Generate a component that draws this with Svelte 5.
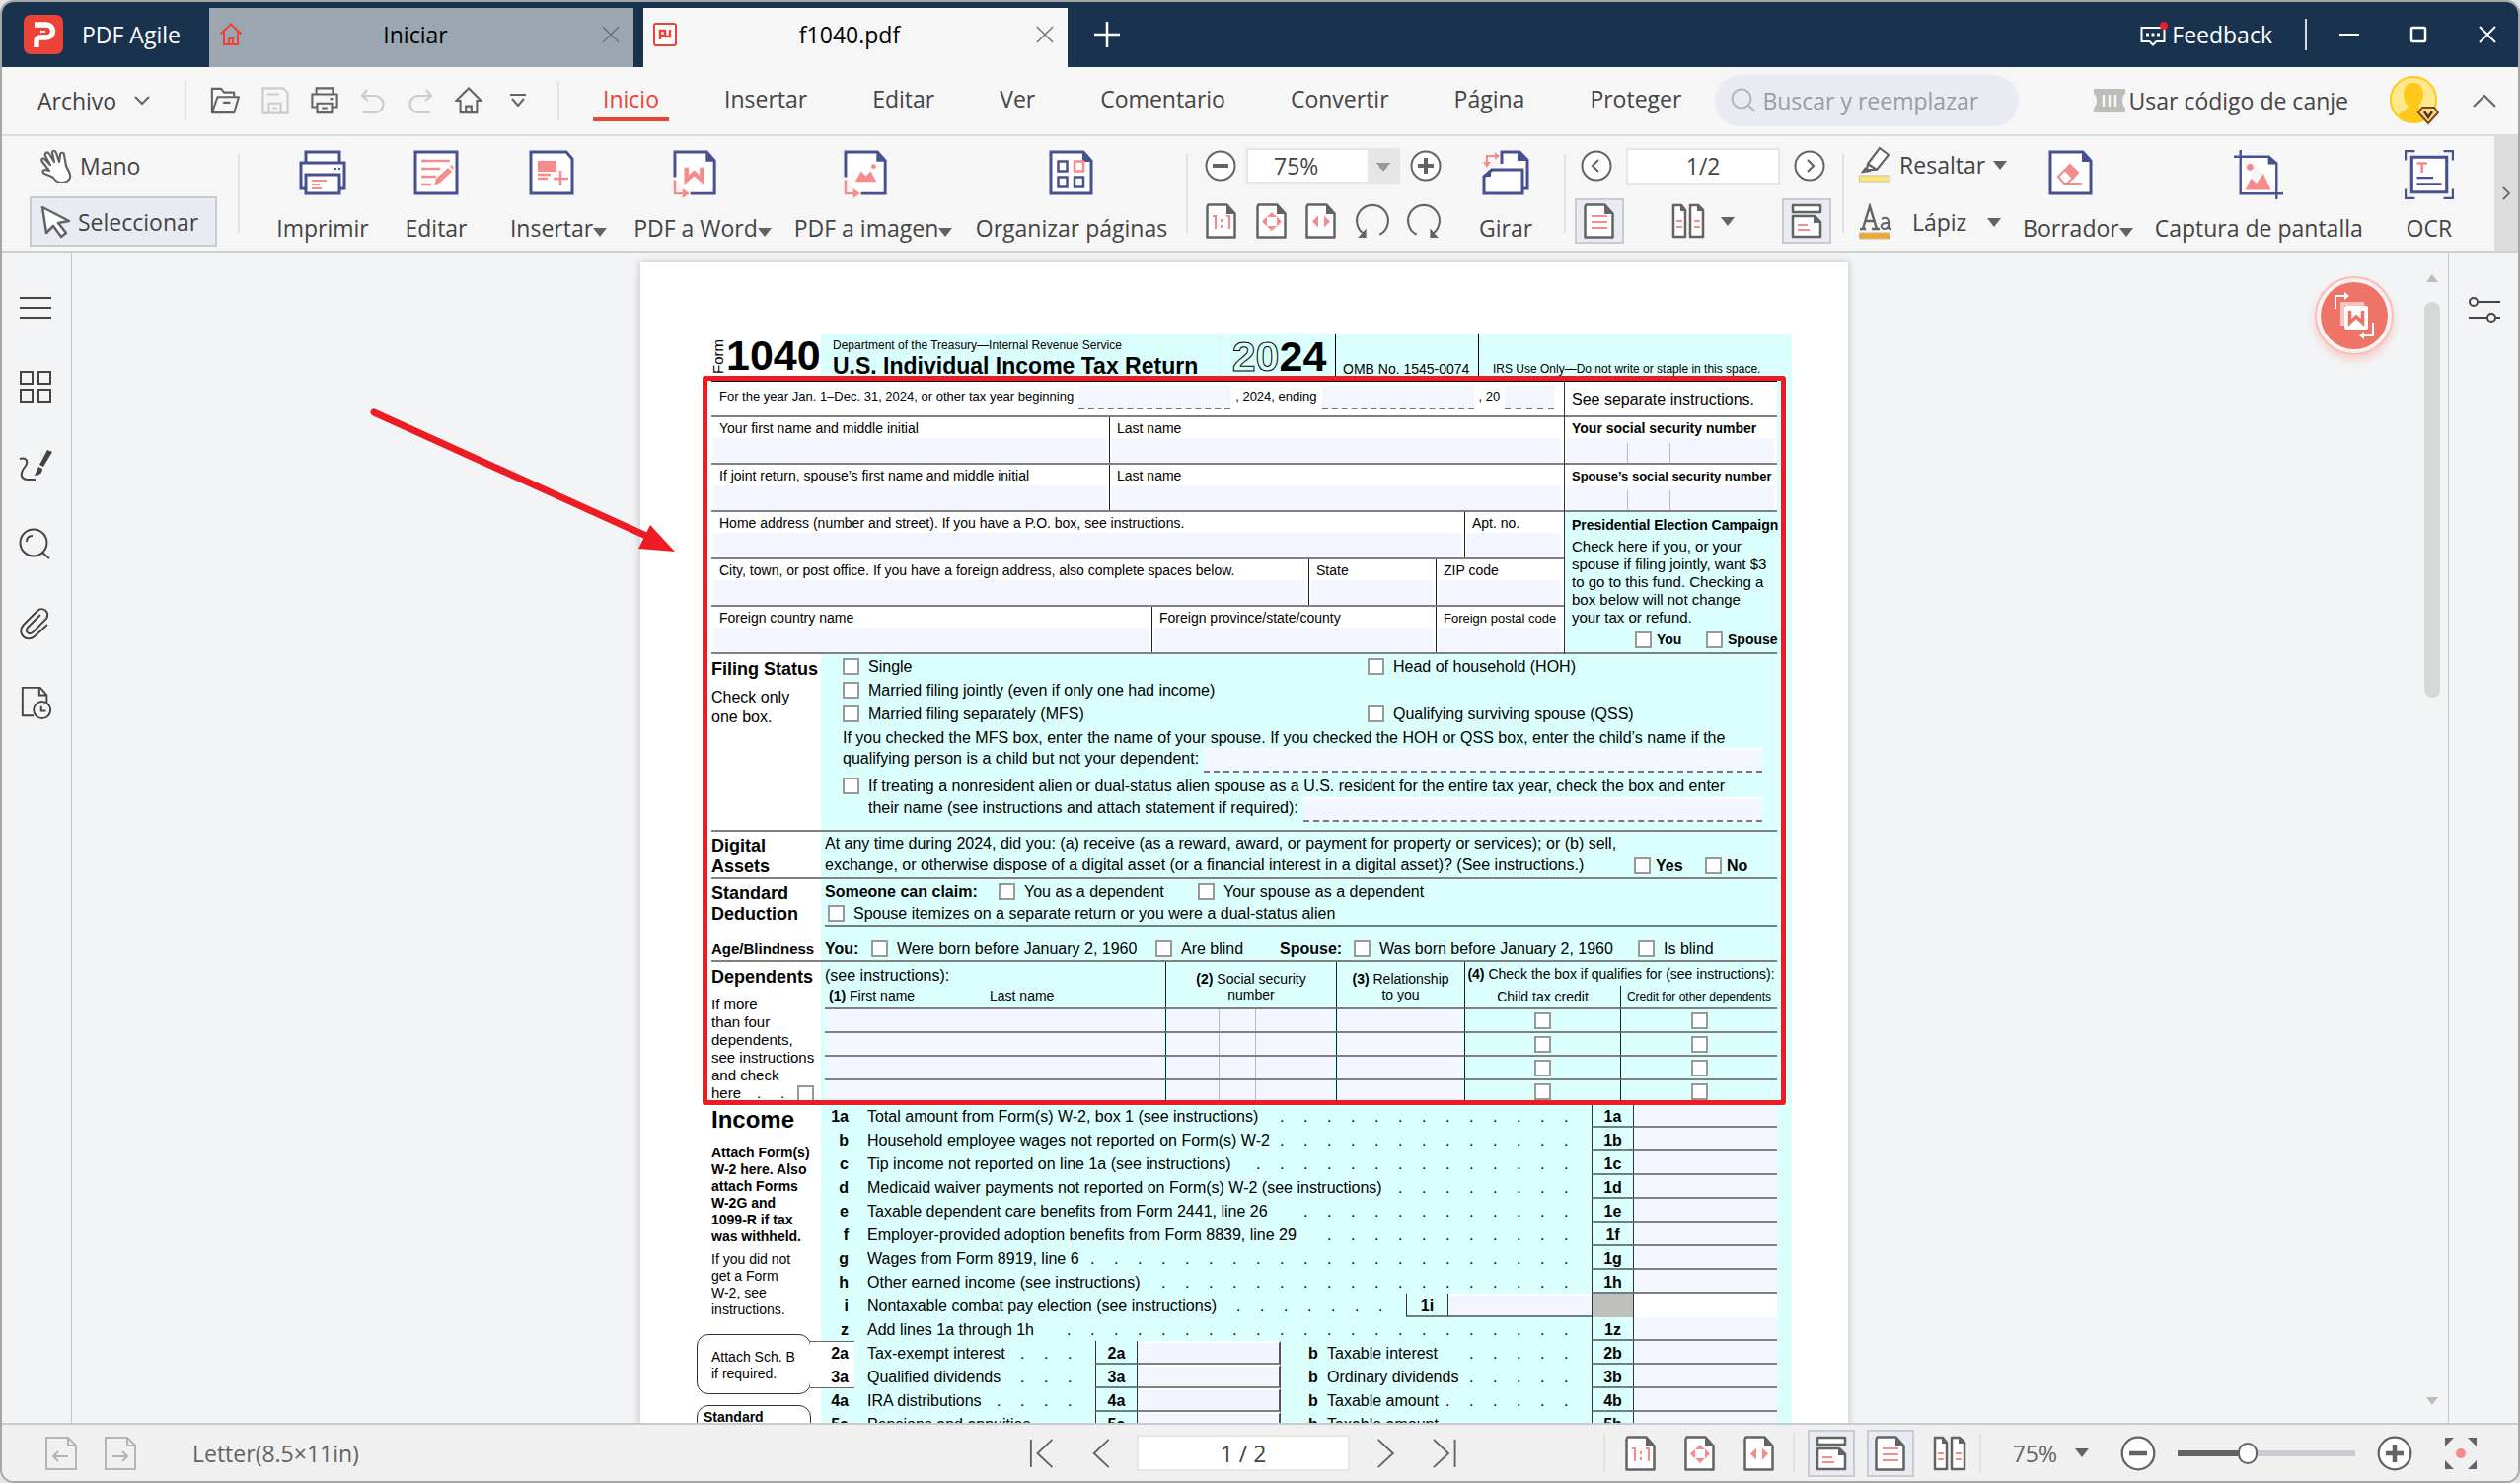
<script lang="ts">
  const G = '#636363';
  const B = '#475091';
  const R = '#f58b8b';

  // document outlines shared by several icons
  const bigDoc = `<path d="M2 2h33l8 9v33H2z" fill="#fff" stroke="${B}" stroke-width="3"/><path d="M34 1v11h10z" fill="${B}"/>`;
  const cutDoc = `<path d="M2 28V2h33l8 9v34H18" fill="#fff" stroke="${B}" stroke-width="3"/><path d="M34 1v11h10z" fill="${B}"/><path d="M2 31v14h9" fill="none" stroke="${R}" stroke-width="2.5"/><path d="M10 40l7 5-7 5z" fill="${R}"/>`;
  const smallDoc = `<path d="M3.500 1.500h19l8 9v24h-28v-31z" fill="#fff" stroke="${G}" stroke-width="2.500" stroke-linejoin="round"/><path d="M22 1v10h9z" fill="${G}"/>`;
  const circle = `<circle cx="16" cy="16" r="14.500" fill="#fff" stroke="${G}" stroke-width="2"/>`;

  const icons: Record<string, { box: string; body: string }> = {
    logo: { box: '0 0 40 40', body: `<rect width="40" height="40" rx="7" fill="#ec4338"/><path d="M11 10h12a6.500 6.500 0 0 1 0 13h-6c-3 0-4 1-4 4v6" fill="none" stroke="#fff" stroke-width="5.500"/><path d="M17 17h5" stroke="#fff" stroke-width="2"/>` },
    tabHome: { box: '0 0 24 24', body: `<path d="M1.500 11.500L12 1.500l10.500 10M5 9v13h14V9M10 22v-6h4v6" fill="none" stroke="#ec4338" stroke-width="2"/>` },
    tabPdf: { box: '0 0 24 24', body: `<rect x="1" y="1" width="22" height="22" rx="2" fill="#fff" stroke="#ec4338" stroke-width="2"/><path d="M7 17V8h5v5H8M17 7v7h-5" fill="none" stroke="#ec4338" stroke-width="2.500"/>` },
    close: { box: '0 0 20 20', body: `<path d="M1 1l18 18M19 1L1 19" stroke="currentColor" stroke-width="1.500"/>` },
    plus: { box: '0 0 26 26', body: `<path d="M13 0v26M0 13h26" stroke="#fff" stroke-width="2.500"/>` },
    feedback: { box: '0 0 28 26', body: `<path d="M1.500 6h23v14h-8l-3.500 3.500L9.500 20h-8z" fill="none" stroke="#fff" stroke-width="2"/><path d="M6 13h3M11.500 13h3M17 13h3" stroke="#fff" stroke-width="3"/><circle cx="24" cy="4" r="4" fill="#f01c24"/>` },
    minimize: { box: '0 0 20 20', body: `<path d="M0 10h20" stroke="#fff" stroke-width="2"/>` },
    maximize: { box: '0 0 20 20', body: `<rect x="3" y="3" width="14" height="14" rx="1" fill="none" stroke="#fff" stroke-width="2.500"/>` },
    quit: { box: '0 0 20 20', body: `<path d="M2 2l16 16M18 2L2 18" stroke="#fff" stroke-width="2"/>` },
    down: { box: '0 0 16 10', body: `<path d="M1 1l7 7 7-7" fill="none" stroke="${G}" stroke-width="2"/>` },
    up: { box: '0 0 24 14', body: `<path d="M1 13L12 2l11 11" fill="none" stroke="${G}" stroke-width="2"/>` },
    open: { box: '0 0 32 30', body: `<path d="M2 27V2h10l3 4h11v5M2 28l6-17h23l-5 17zM14 17h8" fill="none" stroke="${G}" stroke-width="2.200" stroke-linejoin="round"/>` },
    save: { box: '0 0 30 30', body: `<path d="M1.500 1.500h22l5 5v22h-27zM6 8h13M8 28V18h13v10M12 23h5" fill="none" stroke="#c9cbd0" stroke-width="2.200"/>` },
    print: { box: '0 0 30 30', body: `<path d="M6 8V1.500h18V8M6 22H1.500V8h27v14H24M7 18h16v10H7zM12 23h6M21 13h3" fill="none" stroke="${G}" stroke-width="2.200"/>` },
    undo: { box: '0 0 26 28', body: `<path d="M7 3L2 9l6 5M2 9h13a8.500 8.500 0 0 1 0 17H3" fill="none" stroke="#c9cbd0" stroke-width="2.200"/>` },
    redo: { box: '0 0 26 28', body: `<path d="M19 3l5 6-6 5M24 9H11a8.500 8.500 0 0 0 0 17h12" fill="none" stroke="#c9cbd0" stroke-width="2.200"/>` },
    home: { box: '0 0 30 30', body: `<path d="M1.500 15L15 1.500 28.500 15H24v13H6V15zM12 28v-7h6v7" fill="none" stroke="${G}" stroke-width="2.200"/>` },
    custom: { box: '0 0 16 14', body: `<path d="M0 1h16M2 5l6 7 6-7" fill="none" stroke="${G}" stroke-width="2"/>` },
    search: { box: '0 0 26 26', body: `<circle cx="11" cy="11" r="9.500" fill="none" stroke="#b4b5ba" stroke-width="2"/><path d="M18 18l7 6" stroke="#b4b5ba" stroke-width="2"/>` },
    ticket: { box: '0 0 32 24', body: `<path d="M0 0h32v5c-4 2-4 12 0 14v5H0v-5c4-2 4-12 0-14z" fill="#bcbcb9"/><path d="M10 6v12M16 6v12M22 6v12" stroke="#f6f6f6" stroke-width="2.500"/>` },
    avatar: { box: '0 0 50 50', body: `<circle cx="24" cy="24" r="24" fill="#fee88f"/><path d="M24 7c7 0 10 5 10 11s-3 10-5 13c2 3 7 4 11 10a24 24 0 0 1-32 0c4-6 9-7 11-10-3-3-5-7-5-13S17 7 24 7z" fill="#ffc91a"/><circle cx="24" cy="24" r="23" fill="none" stroke="#ffc91a" stroke-width="2"/><path d="M33 32h12l4 5-10 11-10-11z" fill="#fdd98b" stroke="#7a4a1d" stroke-width="2"/><path d="M35 36l4 6 4-6" fill="none" stroke="#5b3214" stroke-width="2.500"/>` },
    hand: { box: '0 0 34 34', body: `<path d="M13 29c-3-2-6-3-9-4-3-2-1-4 1-4l4 1-7-9c-2-3 1-5 3-2l5 5-5-9c-1-3 2-5 4-2l5 8-2-9c0-3 3-3 4 0l3 9 1-7c0-3 4-3 4 0l2 11c2 5 5 7 4 12-1 3-4 5-9 5-4 0-6-2-8-5z" fill="#fff" stroke="${G}" stroke-width="2.200" stroke-linejoin="round"/>` },
    pointer: { box: '0 0 32 34', body: `<path d="M2 2l4 26 7-7 8 11 5-4-8-10 11-2z" fill="#fff" stroke="${G}" stroke-width="2.500" stroke-linejoin="round"/>` },
    bigPrint: { box: '0 0 48 46', body: `<path d="M7 13V2h34v11M7 39H2V13h44v26h-5" fill="#fff" stroke="${B}" stroke-width="3"/><path d="M7 25h34v19H7z" fill="#fff" stroke="${B}" stroke-width="3"/><path d="M13 31h15M13 35h8M13 39h10" stroke="${R}" stroke-width="2"/><path d="M36 19h2M40 19h2" stroke="${B}" stroke-width="2"/>` },
    bigEdit: { box: '0 0 46 46', body: `<path d="M2 2h42v42H2z" fill="#fff" stroke="${B}" stroke-width="3"/><path d="M8 11h29M8 19h19M8 27h15M8 35h10" stroke="${R}" stroke-width="2.500"/><path d="M21 36l2-7 12-11 4 4-12 11zM37 16l2-1 2 3-1 2z" fill="${R}"/>` },
    bigInsert: { box: '0 0 46 46', body: `<path d="M2 2h36l6 7v35H2z" fill="#fff" stroke="${B}" stroke-width="3"/><path d="M9 11h19v11H9z" fill="${R}"/><path d="M9 25h13M9 29h10M25 29h15M32 21v15" stroke="${R}" stroke-width="2.500"/>` },
    bigWord: { box: '0 0 46 51', body: `${cutDoc}<path d="M14 18v13l8-7 8 7V18" fill="none" stroke="${R}" stroke-width="4.500"/>` },
    bigImage: { box: '0 0 46 51', body: `${cutDoc}<path d="M12 33l6-11 5 5 5-5 6 11z" fill="${R}"/><circle cx="31" cy="17" r="2.500" fill="${R}"/>` },
    bigPages: { box: '0 0 46 46', body: `${bigDoc}<path d="M9.500 11.500h9v10h-9zM9.500 27.500h9v10h-9zM26 27.500h9v10h-9z" fill="none" stroke="${B}" stroke-width="2.500"/><path d="M26 11.500h9v10h-9z" fill="none" stroke="${R}" stroke-width="2.500"/>` },
    bigRotate: { box: '0 0 48 46', body: `<path d="M20 14V2h18l8 8v29h-6" fill="#fff" stroke="${B}" stroke-width="3"/><path d="M36 1v10h11z" fill="${B}"/><path d="M2 27l8-7h31v24H2z" fill="#fff" stroke="${B}" stroke-width="3"/><path d="M1 27l8-8v8z" fill="${B}"/><path d="M5 14V6h9" fill="none" stroke="${R}" stroke-width="2"/><path d="M13 2l5 4-5 4zM1 12l4 6 4-6z" fill="${R}"/>` },
    bigErase: { box: '0 0 46 46', body: `${bigDoc}<path d="M10 27l12-12 8 8-11 11h-3z" fill="#fff" stroke="${R}" stroke-width="2"/><path d="M22 14l9 9-6 7-9-9z" fill="${R}"/><path d="M17 34h17" stroke="${R}" stroke-width="2"/>` },
    bigCapture: { box: '0 0 52 52', body: `<path d="M7 0v46h45M0 7h37l8 7v38" fill="#fff" stroke="${B}" stroke-width="2.500"/><path d="M36 6v9h10z" fill="${B}"/><circle cx="17" cy="18" r="3.500" fill="${R}"/><path d="M12 42l6-12 6 5 7-10 8 17z" fill="${R}"/>` },
    bigOcr: { box: '0 0 48 48', body: `<path d="M7 7h34v34H7z" fill="#fff" stroke="${B}" stroke-width="3"/><path d="M1 10V1h9M38 1h9v9M47 38v9h-9M10 47H1v-9" fill="none" stroke="${B}" stroke-width="2.200"/><path d="M12 13h10M17 13v9" stroke="${R}" stroke-width="2.500"/><path d="M12 27h16M12 33h24" stroke="${B}" stroke-width="2.200"/>` },
    minus: { box: '0 0 32 32', body: `${circle}<path d="M8 16h16" stroke="${G}" stroke-width="4"/>` },
    add: { box: '0 0 32 32', body: `${circle}<path d="M8 16h16M16 8v16" stroke="${G}" stroke-width="4"/>` },
    prev: { box: '0 0 32 32', body: `${circle}<path d="M18 10l-6 6 6 6" fill="none" stroke="${G}" stroke-width="2.200"/>` },
    next: { box: '0 0 32 32', body: `${circle}<path d="M14 10l6 6-6 6" fill="none" stroke="${G}" stroke-width="2.200"/>` },
    actual: { box: '0 0 34 36', body: `${smallDoc}<path d="M8 13h3v13M22 13h3v13M17 16v3M17 22v3" fill="none" stroke="${R}" stroke-width="2.200"/>` },
    fitPage: { box: '0 0 34 36', body: `${smallDoc}<path d="M17 9l5 5H12zM17 28l5-5H12zM7 18.500l5-5v10zM27 18.500l-5-5v10z" fill="${R}"/>` },
    fitWidth: { box: '0 0 34 36', body: `${smallDoc}<path d="M8 18.500l6-6v12zM26 18.500l-6-6v12z" fill="${R}"/>` },
    turnLeft: { box: '0 0 34 34', body: `<path d="M24 30A15 15 0 1 0 10 30" fill="none" stroke="${G}" stroke-width="2"/><path d="M11 24v9H3z" fill="${G}"/>` },
    turnRight: { box: '0 0 34 34', body: `<path d="M10 30A15 15 0 1 1 24 30" fill="none" stroke="${G}" stroke-width="2"/><path d="M23 24v9h8z" fill="${G}"/>` },
    single: { box: '0 0 34 36', body: `${smallDoc}<path d="M9 13h16M9 19h16M9 25h16" stroke="${R}" stroke-width="2"/>` },
    double: { box: '0 0 34 36', body: `<path d="M2 2h8l4 5v27H2zM19 2h8l5 5v27H19z" fill="#fff" stroke="${G}" stroke-width="2.500" stroke-linejoin="round"/><path d="M9 1v7h6zM26 1v7h7z" fill="${G}"/><path d="M5 18h6M5 24h6M23 18h6M23 24h6" stroke="${R}" stroke-width="2"/>` },
    flow: { box: '0 0 34 36', body: `<path d="M3 2h28v7H3zM3 13h22l6 6v15H3z" fill="#fff" stroke="${G}" stroke-width="2.500" stroke-linejoin="round"/><path d="M24 12v8h8z" fill="${G}"/><path d="M8 22h10M8 27h12" stroke="${R}" stroke-width="2"/>` },
    marker: { box: '0 0 34 38', body: `<path d="M22 2l9 7-12 15H9l1-6zM10 18l9 6M8 22l-3 4 8-1" fill="#fff" stroke="${G}" stroke-width="2.200"/><path d="M1.500 30h31v6h-31z" fill="#ffe873" stroke="#bdbdb9"/>` },
    pen: { box: '0 0 34 38', body: `<path d="M2 26h6M14 26h8M5 26L12 3l7 23M8 18h8" fill="none" stroke="${G}" stroke-width="2.500"/><path d="M24 16c5-3 7 0 7 3v7M31 20c-9-1-9 6-4 6 2 0 4-2 4-4M31 26h3" fill="none" stroke="${G}" stroke-width="2"/><path d="M1.500 30h31v6h-31z" fill="#f4a62a" stroke="#bdbdb9"/>` },
    menu: { box: '0 0 34 34', body: `<path d="M1 7h32M1 17h32M1 27h32" stroke="#444" stroke-width="2"/>` },
    grid: { box: '0 0 34 34', body: `<path d="M2 2h12v12H2zM20 2h12v12H20zM2 20h12v12H2zM20 20h12v12H20z" fill="none" stroke="#444" stroke-width="2"/>` },
    brush: { box: '0 0 34 34', body: `<path d="M1 10c6-2 9 2 6 7-4 5-8 13 2 14h8" fill="none" stroke="#444" stroke-width="2"/><path d="M29 1l5 2-9 15-4-2zM20 18l4 2c0 5-4 7-8 7z" fill="#444"/>` },
    find: { box: '0 0 34 34', body: `<circle cx="15" cy="15" r="13.500" fill="none" stroke="#444" stroke-width="2"/><path d="M24 25l7 6M8 14c0-4 2-6 6-6" fill="none" stroke="#444" stroke-width="2"/>` },
    clip: { box: '0 0 34 34', body: `<path d="M22 8L9 21c-3 4 1 8 5 5l14-14c4-7-4-13-9-8L5 18C-3 27 8 37 16 30l13-12" fill="none" stroke="#444" stroke-width="2"/>` },
    history: { box: '0 0 34 36', body: `<path d="M15 32H3V2h19l7 8v8M21 2v8h8" fill="none" stroke="#444" stroke-width="2"/><circle cx="24" cy="26" r="9" fill="#f3f4f6" stroke="#444" stroke-width="2"/><path d="M23 22v5h5" fill="none" stroke="#444" stroke-width="2"/>` },
    sliders: { box: '0 0 32 26', body: `<path d="M10 5h22M0 21h18M28 21h4" stroke="#444" stroke-width="2"/><circle cx="5" cy="5" r="4" fill="none" stroke="#444" stroke-width="2"/><circle cx="23" cy="21" r="4" fill="none" stroke="#444" stroke-width="2"/>` },
    convert: { box: '0 0 80 80', body: `<circle cx="40" cy="40" r="39" fill="#f4f1f0" stroke="#fbbdb7" stroke-width="2"/><circle cx="40" cy="40" r="34" fill="#ee7468"/><path d="M26 26h24v4H30v20h-4z" fill="#f9c4bf"/><rect x="30" y="30" width="24" height="24" rx="2" fill="#fff"/><path d="M35.500 35v12l6.500-6 6.500 6V35" fill="none" stroke="#ee7468" stroke-width="3.500"/><path d="M21 33V20h10M59 47v13H49" fill="none" stroke="#fff" stroke-width="2"/><path d="M30 16l5 4-5 4zM50 56l-5 4 5 4z" fill="#fff"/>` },
    back: { box: '0 0 34 36', body: `<path d="M2 2h22l8 8v24H2zM24 2v8h8M9 21h15M14 16l-5 5 5 5" fill="none" stroke="#b4b4b4" stroke-width="2"/>` },
    forward: { box: '0 0 34 36', body: `<path d="M2 2h22l8 8v24H2zM24 2v8h8M9 21h15M19 16l5 5-5 5" fill="none" stroke="#b4b4b4" stroke-width="2"/>` },
    first: { box: '0 0 26 34', body: `<path d="M2 2v30M25 2L9 17l16 15" fill="none" stroke="${G}" stroke-width="2"/>` },
    left: { box: '0 0 26 34', body: `<path d="M21 2L5 17l16 15" fill="none" stroke="${G}" stroke-width="2"/>` },
    right: { box: '0 0 26 34', body: `<path d="M5 2l16 15L5 32" fill="none" stroke="${G}" stroke-width="2"/>` },
    last: { box: '0 0 26 34', body: `<path d="M24 2v30M1 2l16 15L1 32" fill="none" stroke="${G}" stroke-width="2"/>` },
    full: { box: '0 0 32 32', body: `<path d="M0 0h9L0 9zM32 0v9l-9-9zM32 32h-9l9-9zM0 32v-9l9 9z" fill="${G}"/><circle cx="16" cy="16" r="5" fill="${R}"/>` },
    chevron: { box: '0 0 10 16', body: `<path d="M1 1l7 7-7 7" fill="none" stroke="${G}" stroke-width="2"/>` }
  };

  const menus = ['Inicio', 'Insertar', 'Editar', 'Ver', 'Comentario', 'Convertir', 'Página', 'Proteger'];
  const quick = ['open', 'save', 'print', 'undo', 'redo', 'home'];
  const rail = [
    ['menu', 'Menú'],
    ['grid', 'Miniaturas'],
    ['brush', 'Firmas'],
    ['find', 'Buscar'],
    ['clip', 'Adjuntos'],
    ['history', 'Historial']
  ];

  const income = [
    { n: '1a', text: 'Total amount from Form(s) W-2, box 1 (see instructions)', dots: 13, box: '1a' },
    { n: 'b', text: 'Household employee wages not reported on Form(s) W-2', dots: 13, box: '1b' },
    { n: 'c', text: 'Tip income not reported on line 1a (see instructions)', dots: 14, box: '1c' },
    { n: 'd', text: 'Medicaid waiver payments not reported on Form(s) W-2 (see instructions)', dots: 8, box: '1d' },
    { n: 'e', text: 'Taxable dependent care benefits from Form 2441, line 26', dots: 12, box: '1e' },
    { n: 'f', text: 'Employer-provided adoption benefits from Form 8839, line 29', dots: 11, box: '1f' },
    { n: 'g', text: 'Wages from Form 8919, line 6', dots: 21, box: '1g' },
    { n: 'h', text: 'Other earned income (see instructions)', dots: 18, box: '1h' }
  ];

  const pairs = [
    { n: '2a', text: 'Tax-exempt interest', dots: 3, b: '2b', btext: 'Taxable interest', bdots: 5, tag: 'tag-top' },
    { n: '3a', text: 'Qualified dividends', dots: 3, b: '3b', btext: 'Ordinary dividends', bdots: 5, tag: 'tag-bottom' },
    { n: '4a', text: 'IRA distributions', dots: 4, b: '4b', btext: 'Taxable amount', bdots: 6, tag: '' },
    { n: '5a', text: 'Pensions and annuities', dots: 0, b: '5b', btext: 'Taxable amount', bdots: 0, tag: '' }
  ];

  let zoom = $state(38);
</script>

{#snippet icon(name: string, size: string)}
  <svg class="icon {size}" viewBox={icons[name].box} aria-hidden="true">{@html icons[name].body}</svg>
{/snippet}

{#snippet big(name: string, label: string, arrow = false, size = 's46')}
  <button class="big" class:with-arrow={arrow}>
    {@render icon(name, size)}
    <span class="big-label">{label}{#if arrow}<i class="caret"></i>{/if}</span>
  </button>
{/snippet}

{#snippet check(label: string)}
  <label class="check"><input type="checkbox" />{label}</label>
{/snippet}

{#snippet field(label: string)}
  <label class="cell"><span>{label}</span><input type="text" /></label>
{/snippet}

{#snippet leader(count: number)}
  <span class="leader">{#each Array(count) as _}<span>.</span>{/each}</span>
{/snippet}

<div class="window">
  <header class="titlebar">
    <div class="brand">{@render icon('logo', 's40')}<span>PDF Agile</span></div>
    <div class="tab">
      {@render icon('tabHome', 's24')}
      <span class="tab-title">Iniciar</span>
      <button class="plain" aria-label="Cerrar Iniciar">{@render icon('close', 's18')}</button>
    </div>
    <div class="tab active">
      {@render icon('tabPdf', 's24')}
      <span class="tab-title">f1040.pdf</span>
      <button class="plain" aria-label="Cerrar f1040.pdf">{@render icon('close', 's18')}</button>
    </div>
    <button class="plain new-tab" aria-label="Nueva pestaña">{@render icon('plus', 's26')}</button>
    <div class="window-tools">
      <button class="plain feedback">{@render icon('feedback', 's26')}Feedback</button>
      <i class="rule light"></i>
      <button class="plain" aria-label="Minimizar">{@render icon('minimize', 's20')}</button>
      <button class="plain" aria-label="Maximizar">{@render icon('maximize', 's20')}</button>
      <button class="plain" aria-label="Cerrar">{@render icon('quit', 's20')}</button>
    </div>
  </header>

  <nav class="menubar">
    <button class="plain file">Archivo {@render icon('down', 's10')}</button>
    <i class="rule"></i>
    <div class="quick">
      {#each quick as name}
        <button class="plain" aria-label={name}>{@render icon(name, 's28')}</button>
      {/each}
      <button class="plain" aria-label="Personalizar">{@render icon('custom', 's14')}</button>
    </div>
    <i class="rule"></i>
    <div class="menus">
      {#each menus as item, i}
        <button class="plain menu" class:current={i === 0}>{item}</button>
      {/each}
    </div>
    <label class="search">
      {@render icon('search', 's26')}
      <input type="search" placeholder="Buscar y reemplazar" aria-label="Buscar y reemplazar" />
    </label>
    <div class="account">
      <button class="plain redeem">{@render icon('ticket', 's24')}Usar código de canje</button>
      <button class="plain" aria-label="Cuenta">{@render icon('avatar', 's50')}</button>
      <button class="plain" aria-label="Contraer">{@render icon('up', 's14')}</button>
    </div>
  </nav>

  <div class="ribbon">
    <div class="group modes">
      <button class="plain mode">{@render icon('hand', 's34')}Mano</button>
      <button class="plain mode selected">{@render icon('pointer', 's34')}Seleccionar</button>
    </div>
    <i class="rule tall"></i>
    <div class="group actions">
      {@render big('bigPrint', 'Imprimir')}
      {@render big('bigEdit', 'Editar')}
      {@render big('bigInsert', 'Insertar', true)}
      {@render big('bigWord', 'PDF a Word', true, 's50')}
      {@render big('bigImage', 'PDF a imagen', true, 's50')}
      {@render big('bigPages', 'Organizar páginas')}
    </div>
    <i class="rule tall"></i>
    <div class="group stack zoom-group">
      <div class="line">
        <button class="plain" aria-label="Alejar">{@render icon('minus', 's32')}</button>
        <select class="zoom-select" aria-label="Zoom"><option>75%</option></select>
        <button class="plain" aria-label="Acercar">{@render icon('add', 's32')}</button>
      </div>
      <div class="line">
        {#each ['actual', 'fitPage', 'fitWidth', 'turnLeft', 'turnRight'] as name}
          <button class="plain" aria-label={name}>{@render icon(name, 's36')}</button>
        {/each}
      </div>
    </div>
    {@render big('bigRotate', 'Girar')}
    <i class="rule tall page-rule"></i>
    <div class="group stack page-group">
      <div class="line">
        <button class="plain" aria-label="Página anterior">{@render icon('prev', 's32')}</button>
        <input class="page-box" type="text" value="1/2" aria-label="Página" />
        <button class="plain" aria-label="Página siguiente">{@render icon('next', 's32')}</button>
      </div>
      <div class="line">
        <button class="plain view selected" aria-label="Una página">{@render icon('single', 's36')}</button>
        <button class="plain pair" aria-label="Dos páginas">{@render icon('double', 's36')}<i class="caret"></i></button>
        <button class="plain view selected" aria-label="Continuo">{@render icon('flow', 's36')}</button>
      </div>
    </div>
    <i class="rule tall"></i>
    <div class="group stack pens">
      <button class="plain pen">{@render icon('marker', 's38')}<span>Resaltar</span><i class="caret"></i></button>
      <button class="plain pen">{@render icon('pen', 's38')}<span>Lápiz</span><i class="caret"></i></button>
    </div>
    <div class="group extras">
      {@render big('bigErase', 'Borrador', true)}
      {@render big('bigCapture', 'Captura de pantalla', false, 's50')}
      {@render big('bigOcr', 'OCR', false, 's50')}
    </div>
    <button class="plain more" aria-label="Más">{@render icon('chevron', 's14')}</button>
  </div>

  <div class="body">
    <aside class="rail">
      {#each rail as [name, label]}
        <button class="plain" aria-label={label}>{@render icon(name, 's34')}</button>
      {/each}
    </aside>

    <main class="viewer">
      <article class="page">
        <form class="form">
          <div class="form-head">
            <span class="form-word">Form</span>
            <span class="form-number">1040</span>
            <div class="form-title">
              <small>Department of the Treasury—Internal Revenue Service</small>
              <h1>U.S. Individual Income Tax Return</h1>
            </div>
            <div class="year"><span>20</span>24</div>
            <div class="omb">OMB No. 1545-0074</div>
            <div class="irs">IRS Use Only—Do not write or staple in this space.</div>
          </div>

          <section class="personal">
            <div class="personal-left">
              <div class="year-line">
                <label for="from">For the year Jan. 1–Dec. 31, 2024, or other tax year beginning</label>
                <input id="from" class="dashed" type="text" />
                <label for="to">, 2024, ending</label>
                <input id="to" class="dashed" type="text" />
                <label for="yy">, 20</label>
                <input id="yy" class="dashed yy" type="text" />
              </div>
              <div class="fields names">{@render field('Your first name and middle initial')}{@render field('Last name')}</div>
              <div class="fields names">{@render field('If joint return, spouse’s first name and middle initial')}{@render field('Last name')}</div>
              <div class="fields home">{@render field('Home address (number and street). If you have a P.O. box, see instructions.')}{@render field('Apt. no.')}</div>
              <div class="fields city">{@render field('City, town, or post office. If you have a foreign address, also complete spaces below.')}{@render field('State')}{@render field('ZIP code')}</div>
              <div class="fields foreign">{@render field('Foreign country name')}{@render field('Foreign province/state/county')}{@render field('Foreign postal code')}</div>
            </div>
            <div class="personal-right">
              <div class="separate">See separate instructions.</div>
              <div class="fields ssn">{@render field('Your social security number')}</div>
              <div class="fields ssn narrow">{@render field('Spouse’s social security number')}</div>
              <div class="campaign">
                <strong>Presidential Election Campaign</strong>
                <p>Check here if you, or your<br />spouse if filing jointly, want $3<br />to go to this fund. Checking a<br />box below will not change<br />your tax or refund.</p>
                <div class="two">{@render check('You')}{@render check('Spouse')}</div>
              </div>
            </div>
          </section>

          <section class="part filing">
            <div class="side">
              <h2>Filing Status</h2>
              <p>Check only<br />one box.</p>
            </div>
            <div class="filing-main">
              <div class="choices">
                {@render check('Single')}
                {@render check('Head of household (HOH)')}
                {@render check('Married filing jointly (even if only one had income)')}
                <span></span>
                {@render check('Married filing separately (MFS)')}
                {@render check('Qualifying surviving spouse (QSS)')}
              </div>
              <p>If you checked the MFS box, enter the name of your spouse. If you checked the HOH or QSS box, enter the child’s name if the</p>
              <label class="fill">qualifying person is a child but not your dependent: <input class="dashed" type="text" /></label>
              <div class="alien">
                {@render check('If treating a nonresident alien or dual-status alien spouse as a U.S. resident for the entire tax year, check the box and enter')}
                <label class="fill">their name (see instructions and attach statement if required): <input class="dashed" type="text" /></label>
              </div>
            </div>
          </section>

          <section class="part digital">
            <h2 class="side">Digital<br />Assets</h2>
            <div class="digital-main">
              <p>At any time during 2024, did you: (a) receive (as a reward, award, or payment for property or services); or (b) sell,<br />exchange, or otherwise dispose of a digital asset (or a financial interest in a digital asset)? (See instructions.)</p>
              <div class="two">{@render check('Yes')}{@render check('No')}</div>
            </div>
          </section>

          <section class="part standard">
            <div class="side">
              <h2>Standard<br />Deduction</h2>
              <h3>Age/Blindness</h3>
            </div>
            <div>
              <div class="claims">
                <div class="claim-row"><strong>Someone can claim:</strong>{@render check('You as a dependent')}{@render check('Your spouse as a dependent')}</div>
                <div class="itemize">{@render check('Spouse itemizes on a separate return or you were a dual-status alien')}</div>
              </div>
              <div class="age">
                <strong>You:</strong>
                {@render check('Were born before January 2, 1960')}
                {@render check('Are blind')}
                <strong>Spouse:</strong>
                {@render check('Was born before January 2, 1960')}
                {@render check('Is blind')}
              </div>
            </div>
          </section>

          <section class="part dependents">
            <div class="side">
              <h2>Dependents</h2>
              <p>If more<br />than four<br />dependents,<br />see instructions<br />and check</p>
              <label class="here">here<span>.</span><span>.</span><input type="checkbox" /></label>
            </div>
            <table>
              <colgroup><col class="c-name" /><col class="c-ssn" /><col class="c-rel" /><col class="c-child" /><col class="c-other" /></colgroup>
              <thead>
                <tr>
                  <th rowspan="2" class="th-name">
                    <span class="see">(see instructions):</span>
                    <span class="first-last"><span><b>(1)</b> First name</span><span>Last name</span></span>
                  </th>
                  <th rowspan="2" class="th-mid"><b>(2)</b> Social security<br />number</th>
                  <th rowspan="2" class="th-mid"><b>(3)</b> Relationship<br />to you</th>
                  <th colspan="2" class="th-four"><b>(4)</b> Check the box if qualifies for (see instructions):</th>
                </tr>
                <tr>
                  <th class="lined">Child tax credit</th>
                  <th class="lined small">Credit for other dependents</th>
                </tr>
              </thead>
              <tbody>
                {#each [1, 2, 3, 4] as row}
                  <tr>
                    <td><input type="text" aria-label="Name {row}" /></td>
                    <td><input class="ssn-line" type="text" aria-label="Social security number {row}" /></td>
                    <td><input type="text" aria-label="Relationship {row}" /></td>
                    <td class="tick"><input type="checkbox" aria-label="Child tax credit {row}" /></td>
                    <td class="tick"><input type="checkbox" aria-label="Credit for other dependents {row}" /></td>
                  </tr>
                {/each}
              </tbody>
            </table>
          </section>

          <section class="income">
            <div class="side">
              <h2 class="income-title">Income</h2>
              <p class="attach"><b>Attach Form(s)<br />W-2 here. Also<br />attach Forms<br />W-2G and<br />1099-R if tax<br />was withheld.</b></p>
              <p class="missing">If you did not<br />get a Form<br />W-2, see<br />instructions.</p>
              <div class="note">Attach Sch. B<br />if required.</div>
              <div class="note standard-note"><b>Standard</b></div>
            </div>
            <div>
              {#each income as row}
                <div class="row">
                  <b class="num">{row.n}</b>
                  <span class="text">{row.text}</span>
                  {@render leader(row.dots)}
                  <b class="box">{row.box}</b>
                  <input class="amount" type="text" aria-label="Line {row.box}" />
                </div>
              {/each}
              <div class="row">
                <b class="num">i</b>
                <span class="text">Nontaxable combat pay election (see instructions)</span>
                {@render leader(7)}
                <b class="box combat">1i</b>
                <input class="amount combat" type="text" aria-label="Line 1i" />
                <span class="box gray"></span>
                <span class="amount empty"></span>
              </div>
              <div class="row">
                <b class="num">z</b>
                <span class="text">Add lines 1a through 1h</span>
                {@render leader(22)}
                <b class="box">1z</b>
                <input class="amount" type="text" aria-label="Line 1z" />
              </div>
              {#each pairs as row}
                <div class="row">
                  <div class="half">
                    <b class="num {row.tag}">{row.n}</b>
                    <span class="text">{row.text}</span>
                    {@render leader(row.dots)}
                    <b class="box">{row.n}</b>
                    <input class="amount closed" type="text" aria-label="Line {row.n}" />
                  </div>
                  <b class="num-b">b</b>
                  <span class="text">{row.btext}</span>
                  {@render leader(row.bdots)}
                  <b class="box">{row.b}</b>
                  <input class="amount" type="text" aria-label="Line {row.b}" />
                </div>
              {/each}
            </div>
          </section>
        </form>
        <div class="highlight"></div>
        <svg class="arrow" viewBox="0 0 316 160" aria-hidden="true">
          <path d="M9 10L296 140" stroke="#ed1c24" stroke-width="7" stroke-linecap="round" />
          <path d="M289 124L314 151L277 148z" fill="#ed1c24" />
        </svg>
      </article>
      <button class="plain convert" aria-label="Convertir a Word">{@render icon('convert', 's80')}</button>
    </main>

    <div class="scrollbar"><i class="tri-up"></i><i class="thumb"></i><i class="tri-down"></i></div>
    <aside class="right-rail">
      <button class="plain" aria-label="Propiedades">{@render icon('sliders', 's26')}</button>
    </aside>
  </div>

  <footer class="status">
    <div class="status-left">
      <button class="plain" aria-label="Vista anterior">{@render icon('back', 's36')}</button>
      <button class="plain" aria-label="Vista siguiente">{@render icon('forward', 's36')}</button>
      <span>Letter(8.5×11in)</span>
    </div>
    <div class="pager">
      <button class="plain" aria-label="Primera página">{@render icon('first', 's32')}</button>
      <button class="plain" aria-label="Anterior">{@render icon('left', 's32')}</button>
      <input type="text" value="1 / 2" aria-label="Página actual" />
      <button class="plain" aria-label="Siguiente">{@render icon('right', 's32')}</button>
      <button class="plain" aria-label="Última página">{@render icon('last', 's32')}</button>
    </div>
    <div class="status-right">
      <i class="rule"></i>
      <div class="fits">
        <button class="plain" aria-label="Tamaño real">{@render icon('actual', 's36')}</button>
        <button class="plain" aria-label="Ajustar página">{@render icon('fitPage', 's36')}</button>
        <button class="plain" aria-label="Ajustar ancho">{@render icon('fitWidth', 's36')}</button>
      </div>
      <i class="rule"></i>
      <div class="views">
        <button class="plain view selected" aria-label="Continuo">{@render icon('flow', 's36')}</button>
        <button class="plain view selected" aria-label="Una página">{@render icon('single', 's36')}</button>
        <button class="plain view" aria-label="Dos páginas">{@render icon('double', 's36')}</button>
      </div>
      <i class="rule"></i>
      <button class="plain percent">75% <i class="caret"></i></button>
      <button class="plain" aria-label="Reducir">{@render icon('minus', 's36')}</button>
      <input class="slider" type="range" min="0" max="100" bind:value={zoom} style="--fill: {zoom}%" aria-label="Nivel de zoom" />
      <button class="plain" aria-label="Ampliar">{@render icon('add', 's36')}</button>
      <button class="plain full" aria-label="Pantalla completa">{@render icon('full', 's32')}</button>
    </div>
  </footer>
</div>

<style>
  :global(body) {
    background: #e4e4e4;
  }

  .window,
  .window * {
    box-sizing: border-box;
  }

  .window {
    display: flex;
    flex-direction: column;
    height: 100vh;
    overflow: hidden;
    border: 2px solid #a6a6a6;
    border-radius: 14px;
    background: #f6f6f6;
    color: #444;
    font-family: 'Open Sans', 'Noto Sans', sans-serif;
    font-size: 23px;
    line-height: 30px;
  }

  button,
  input,
  select {
    font: inherit;
    color: inherit;
  }

  .plain,
  .big {
    display: flex;
    align-items: center;
    padding: 0;
    border: 0;
    background: none;
    white-space: nowrap;
  }

  .icon {
    display: block;
    flex: none;
    width: auto;
  }

  .s10 { height: 10px; }
  .s14 { height: 14px; }
  .s18 { height: 18px; }
  .s20 { height: 20px; }
  .s24 { height: 24px; }
  .s26 { height: 26px; }
  .s28 { height: 28px; }
  .s32 { height: 32px; }
  .s34 { height: 34px; }
  .s36 { height: 36px; }
  .s38 { height: 38px; }
  .s40 { height: 40px; }
  .s46 { height: 46px; }
  .s50 { height: 50px; }
  .s80 { height: 80px; }

  .rule {
    flex: none;
    width: 2px;
    height: 40px;
    background: #e2e2e2;
  }

  .rule.tall {
    height: 80px;
  }

  .rule.light {
    height: 32px;
    background: #d5dae0;
  }

  .caret {
    display: inline-block;
    flex: none;
    border: 7px solid transparent;
    border-top: 9px solid #636363;
    border-bottom: 0;
  }

  /* title bar */
  .titlebar {
    display: flex;
    align-items: flex-end;
    flex: none;
    height: 66px;
    background: #19334f;
    color: #fff;
  }

  .brand {
    display: flex;
    align-items: center;
    gap: 19px;
    width: 210px;
    height: 66px;
    padding-left: 22px;
  }

  .tab {
    display: flex;
    align-items: center;
    width: 430px;
    height: 60px;
    margin-right: 10px;
    padding: 0 14px 6px 10px;
    background: #9ca6b1;
    color: #000;
  }

  .tab.active {
    margin-right: 27px;
    background: #f6f6f6;
  }

  .tab-title {
    flex: 1;
    padding-right: 14px;
    text-align: center;
  }

  .tab .plain {
    color: #6b6f73;
  }

  .new-tab {
    height: 66px;
  }

  .window-tools {
    display: flex;
    align-items: center;
    gap: 50px;
    height: 66px;
    margin-left: auto;
    padding-right: 21px;
  }

  .window-tools .rule {
    margin: 0 -17px;
  }

  .feedback {
    gap: 4px;
  }

  /* menu bar */
  .menubar {
    display: flex;
    align-items: center;
    flex: none;
    height: 70px;
    border-bottom: 2px solid #dcdcdc;
  }

  .file {
    gap: 18px;
    width: 185px;
    padding-left: 36px;
  }

  .quick {
    display: flex;
    align-items: center;
    gap: 22px;
    width: 376px;
    padding-left: 24px;
  }

  .quick .plain:last-child {
    margin-left: 6px;
  }

  .menus {
    display: flex;
    gap: 46px;
    margin-left: 34px;
  }

  .menu {
    height: 42px;
    padding: 0 10px;
    border-bottom: 4px solid transparent;
  }

  .current {
    border-bottom-color: #ec4338;
    color: #ec4338;
  }

  .search {
    display: flex;
    align-items: center;
    gap: 6px;
    width: 308px;
    height: 52px;
    margin-left: 24px;
    padding: 0 16px;
    border-radius: 26px;
    background: #e9ebf3;
  }

  .search input {
    width: 100%;
    padding: 0;
    border: 0;
    background: none;
  }

  .search input::placeholder {
    color: #9a9ca0;
  }

  .account {
    display: flex;
    align-items: center;
    gap: 34px;
    margin-left: auto;
    padding-right: 22px;
  }

  .redeem {
    gap: 4px;
  }

  .redeem + .plain {
    margin-left: 8px;
  }

  /* ribbon */
  .ribbon {
    display: flex;
    align-items: center;
    flex: none;
    height: 118px;
    border-bottom: 2px solid #cfcfcf;
  }

  .group {
    flex: none;
  }

  .modes {
    display: flex;
    flex-direction: column;
    gap: 6px;
    width: 239px;
    padding-left: 28px;
  }

  .mode {
    gap: 6px;
    width: 190px;
    height: 51px;
    padding-left: 9px;
    border: 2px solid transparent;
  }

  .selected {
    border: 2px solid #c8cbd3;
    background: #e9ebf3;
  }

  .actions {
    display: grid;
    grid-template-columns: 120px 110px 138px 154px 192px 210px;
    padding: 0 11px 0 24px;
  }

  .big {
    flex-direction: column;
    justify-content: space-between;
    height: 100px;
    padding-top: 6px;
  }

  .with-arrow .icon {
    margin-right: 14px;
  }

  .stack {
    display: flex;
    flex-direction: column;
    gap: 20px;
  }

  .line {
    display: flex;
    align-items: center;
    justify-content: space-between;
    height: 36px;
  }

  .zoom-group {
    width: 240px;
    margin: 0 38px 0 17px;
  }

  .zoom-select {
    width: 156px;
    height: 36px;
    padding: 0 0 0 26px;
    border: 2px solid #e5e5e5;
    border-radius: 0;
    appearance: none;
    background:
      linear-gradient(to bottom right, #999 50%, transparent 50%) 137px 13px / 7px 9px no-repeat,
      linear-gradient(to bottom left, #999 50%, transparent 50%) 130px 13px / 7px 9px no-repeat,
      linear-gradient(to right, #fff 121px, #e5e5e5 121px);
  }

  .page-rule {
    margin-left: 32px;
  }

  .page-group {
    width: 260px;
    margin: 0 11px 0 9px;
  }

  .page-group .line:first-child {
    padding: 0 6px;
  }

  .page-box {
    width: 156px;
    height: 37px;
    padding: 0;
    border: 2px solid #e5e5e5;
    background: #fff;
    text-align: center;
  }

  .view {
    justify-content: center;
    width: 50px;
    height: 46px;
  }

  .pair {
    gap: 16px;
  }

  .pens {
    width: 145px;
    margin-left: 14px;
  }

  .pen {
    height: 38px;
    gap: 8px;
  }

  .pen span {
    flex: 1;
    text-align: center;
  }

  .extras {
    display: flex;
    gap: 22px;
    margin-left: 22px;
  }

  .extras .big:last-child {
    margin-left: 20px;
  }

  .more {
    align-self: stretch;
    justify-content: center;
    width: 24px;
    margin-left: auto;
    background: #dcdcdc;
  }

  /* work area */
  .body {
    display: flex;
    flex: 1;
    min-height: 0;
    background: #f3f4f6;
  }

  .rail {
    display: flex;
    flex-direction: column;
    width: 71px;
    padding: 16px 2px 0 0;
    border-right: 1px solid #c6c6c8;
  }

  .rail button {
    justify-content: center;
    height: 80px;
  }

  .viewer {
    position: relative;
    display: flex;
    flex: 1;
    justify-content: center;
    align-items: flex-start;
    overflow: hidden;
    padding-top: 10px;
  }

  .convert {
    position: absolute;
    top: 24px;
    right: 23px;
    border-radius: 40px;
    box-shadow: 0 5px 8px #f3cdc8;
  }

  .scrollbar {
    display: flex;
    flex-direction: column;
    align-items: center;
    width: 32px;
    padding: 22px 0 18px;
  }

  .tri-up,
  .tri-down {
    border: 6px solid transparent;
    border-bottom: 8px solid #bdbebc;
    border-top: 0;
  }

  .tri-down {
    margin-top: auto;
    border-top: 8px solid #bdbebc;
    border-bottom: 0;
  }

  .thumb {
    width: 16px;
    height: 35%;
    margin-top: 20px;
    border-radius: 8px;
    background: #d6d8d5;
  }

  .right-rail {
    width: 71px;
    padding: 45px 0 0 20px;
    border-left: 1px solid #c6c6c8;
  }

  /* document */
  .page {
    position: relative;
    flex: none;
    width: 1224px;
    min-height: 1584px;
    padding: 72px 57px 0 72px;
    background: #fff;
    box-shadow: 0 0 8px #bbb;
    color: #000;
    font-family: 'Liberation Sans', Arial, sans-serif;
    font-size: 16px;
    line-height: 21px;
  }

  .form {
    padding-right: 15px;
    background: linear-gradient(to right, #fff 111px, #dbfffd 111px);
  }

  .page p,
  .page h1,
  .page h2,
  .page h3 {
    margin: 0;
  }

  .page h2 {
    font-size: 18px;
  }

  .page h3 {
    font-size: 15px;
  }

  .page input {
    margin: 0;
    padding: 0;
    border: 0;
    border-radius: 0;
    background: #f3f6fe;
  }

  .page input[type='checkbox'] {
    flex: none;
    width: 17px;
    height: 17px;
    border: 2px solid #999;
    appearance: none;
    background: #fff;
  }

  .page p {
    white-space: nowrap;
  }

  .check {
    display: flex;
    align-items: center;
    gap: 9px;
    white-space: nowrap;
  }

  .form-head {
    display: flex;
    height: 49px;
    border-bottom: 2px solid #000;
  }

  .form-word {
    width: 15px;
    height: 41px;
    padding-bottom: 3px;
    font-size: 15px;
    line-height: 14px;
    writing-mode: vertical-rl;
    rotate: 180deg;
  }

  .form-number {
    width: 108px;
    font-size: 43px;
    font-weight: bold;
    line-height: 44px;
  }

  .form-title {
    width: 395px;
    padding-top: 4px;
  }

  .form-title small {
    display: block;
    font-size: 12px;
    line-height: 16px;
  }

  .form-title h1 {
    font-size: 23px;
    line-height: 26px;
  }

  .year {
    width: 115px;
    border-left: 1px solid #000;
    border-right: 1px solid #000;
    font-size: 43px;
    font-weight: bold;
    line-height: 47px;
    text-align: center;
  }

  .year span {
    color: #dbfffd;
    -webkit-text-stroke: 1px #000;
  }

  .omb,
  .irs {
    padding: 26px 7px 0;
    font-size: 14px;
    white-space: nowrap;
  }

  .irs {
    padding-left: 14px;
    border-left: 1px solid #000;
    font-size: 12px;
  }

  .omb {
    width: 144px;
  }

  .personal {
    display: grid;
    grid-template-columns: 864px 216px;
    background: #fff;
  }

  .personal-right {
    border-left: 1px solid #333;
    background: #dbfffd;
  }

  .year-line {
    display: flex;
    align-items: flex-start;
    gap: 5px;
    height: 36px;
    padding: 4px 8px 0 8px;
    border-bottom: 2px solid #808080;
    font-size: 13px;
    white-space: nowrap;
  }

  .page .dashed {
    width: 154px;
    height: 24px;
    border-bottom: 2px dashed #777;
  }

  .page .yy {
    width: 50px;
  }

  .separate {
    height: 36px;
    padding: 7px 0 0 7px;
    border-bottom: 2px solid #808080;
    background: #fff;
  }

  .fields {
    display: grid;
    height: 48px;
    border-bottom: 2px solid #808080;
    background: #fff;
  }

  .names { grid-template-columns: 403px 1fr; }
  .home { grid-template-columns: 763px 1fr; }
  .city { grid-template-columns: 605px 129px 1fr; }
  .foreign { grid-template-columns: 446px 288px 1fr; }

  .cell {
    display: flex;
    flex-direction: column;
    justify-content: space-between;
    padding: 3px 3px 0 2px;
    font-size: 14px;
    line-height: 17px;
    white-space: nowrap;
  }

  .cell + .cell {
    border-left: 1px solid #222;
  }

  .cell span {
    padding-left: 6px;
  }

  .cell + .cell span,
  .ssn span {
    padding-left: 5px;
  }

  .cell input {
    width: 100%;
    height: 25px;
  }

  .ssn span {
    font-weight: bold;
  }

  .narrow span,
  .foreign .cell:last-child span {
    font-size: 13px;
  }

  .page .ssn input {
    background:
      linear-gradient(#bbb, #bbb) 61px 100% / 1px 20px no-repeat,
      linear-gradient(#bbb, #bbb) 104px 100% / 1px 20px no-repeat,
      #f3f6fe;
  }

  .campaign {
    height: 144px;
    padding: 3px 0 0 7px;
    border-bottom: 2px solid #808080;
    font-size: 14px;
    white-space: nowrap;
  }

  .page .campaign p {
    margin: 2px 0 3px;
    font-size: 15px;
    line-height: 18px;
  }

  .two {
    display: grid;
    grid-template-columns: 72px 72px;
    align-items: center;
    font-weight: bold;
  }

  .two .check {
    gap: 5px;
  }

  .campaign .two {
    padding-left: 64px;
  }

  .part {
    display: grid;
    grid-template-columns: 111px 969px;
    border-bottom: 2px solid #808080;
  }

  .filing {
    height: 180px;
  }

  .filing .side {
    padding-top: 5px;
  }

  .page .filing .side p {
    margin-top: 8px;
    line-height: 20px;
  }

  .filing-main {
    padding: 0 15px 0 22px;
  }

  .choices {
    display: grid;
    grid-template-columns: 532px 1fr;
    grid-auto-rows: 24px;
    margin-bottom: 2px;
  }

  .fill {
    display: flex;
    gap: 5px;
    height: 26px;
    white-space: nowrap;
  }

  .page .fill .dashed {
    flex: 1;
    width: 0;
    height: 25px;
    border-top: 2px solid #fff;
  }

  .alien {
    padding-top: 2px;
  }

  .alien .fill {
    padding: 1px 0 0 26px;
  }

  .digital {
    height: 48px;
  }

  .digital .side {
    padding-top: 4px;
  }

  .digital-main {
    display: flex;
    align-items: flex-end;
    justify-content: space-between;
    padding: 0 1px 1px 4px;
  }

  .digital-main p {
    line-height: 22px;
  }

  .standard {
    height: 84px;
  }

  .standard h2 {
    padding-top: 4px;
  }

  .standard h3 {
    padding-top: 14px;
  }

  .claims {
    height: 48px;
    margin-left: 4px;
    border-bottom: 2px solid #6f7f7f;
  }

  .claim-row {
    display: grid;
    grid-template-columns: 176px 202px 1fr;
    height: 24px;
    align-items: center;
  }

  .itemize {
    padding-left: 3px;
  }

  .age {
    display: grid;
    grid-template-columns: 47px 288px 126px 75px 288px 1fr;
    align-items: center;
    height: 34px;
    padding: 10px 0 0 4px;
  }

  .dependents {
    height: 144px;
  }

  .dependents .side {
    padding-top: 5px;
    font-size: 15px;
    line-height: 18px;
  }

  .page .dependents .side p {
    margin-top: 8px;
  }

  .dependents h2 {
    line-height: 21px;
  }

  .here {
    display: flex;
    align-items: center;
  }

  .here span {
    width: 24px;
    padding-left: 16px;
  }

  .page .here input {
    margin: 0 7px 0 auto;
  }

  table {
    width: 965px;
    margin-left: 4px;
    border-collapse: separate;
    border-spacing: 0;
    table-layout: fixed;
  }

  .c-name { width: 345px; }
  .c-ssn { width: 173px; }
  .c-rel { width: 130px; }
  .c-child { width: 158px; }
  .c-other { width: 159px; }

  th,
  td {
    height: 24px;
    padding: 0;
    border-bottom: 2px solid #808080;
    border-left: 1px solid #222;
    font-size: 14px;
    font-weight: normal;
    line-height: 16px;
    white-space: nowrap;
  }

  th:first-child:not(.lined),
  td:first-child {
    border-left: 0;
  }

  .th-four {
    border-bottom: 0;
  }

  .th-mid {
    padding-top: 3px;
  }

  .small {
    font-size: 12px;
  }

  .th-name {
    text-align: left;
  }

  .see {
    display: block;
    font-size: 16px;
    line-height: 22px;
  }

  .first-last {
    display: grid;
    grid-template-columns: 163px 1fr;
    padding-left: 4px;
    line-height: 18px;
  }

  .page td input[type='text'] {
    display: block;
    width: calc(100% - 4px);
    height: 22px;
    margin-left: 2px;
  }

  .page td .ssn-line {
    background:
      linear-gradient(#bbb, #bbb) 51px 0 / 1px 100% no-repeat,
      linear-gradient(#bbb, #bbb) 88px 0 / 1px 100% no-repeat,
      #f3f6fe;
  }

  .page .tick input {
    display: block;
    margin: auto;
  }

  /* income lines */
  .income {
    display: grid;
    grid-template-columns: 111px 969px;
  }

  .income .side {
    font-size: 14px;
    line-height: 17px;
  }

  .page .income-title {
    font-size: 24px;
    line-height: 32px;
  }

  .page .attach {
    margin-top: 9px;
  }

  .page .missing {
    margin: 6px 0 16px;
  }

  .note {
    width: 116px;
    height: 61px;
    margin: 0 0 11px -15px;
    padding: 14px 0 0 14px;
    border: 1px solid #333;
    border-radius: 12px;
  }

  .standard-note {
    padding: 3px 0 0 6px;
  }

  .row,
  .half {
    display: flex;
    height: 24px;
    line-height: 26px;
    white-space: nowrap;
  }

  .half {
    width: 466px;
  }

  .num {
    flex: none;
    width: 34px;
    margin-right: 13px;
    padding-right: 6px;
    text-align: right;
  }

  .tag-top,
  .tag-bottom {
    width: 45px;
    margin-left: -11px;
    border: 0 solid #666;
    background: #fff;
  }

  .tag-top {
    border-top-width: 1px;
    line-height: 24px;
  }

  .tag-bottom {
    border-bottom-width: 1px;
  }

  .num-b {
    width: 19px;
    margin-left: 28px;
  }

  .leader {
    display: flex;
    flex: 1;
    justify-content: flex-end;
    padding-right: 4px;
  }

  .leader span {
    width: 24px;
  }

  .box {
    flex: none;
    width: 43px;
    border: 1px solid #333;
    border-top: 0;
    border-bottom: 2px solid #6f7f7f;
    text-align: center;
  }

  .page .amount {
    flex: none;
    width: 145px;
    border-bottom: 2px solid #808080;
  }

  .page .amount.combat {
    border-top: 2px solid #fff;
    border-bottom-color: #6f7f7f;
  }

  .page .amount.closed {
    border-right: 2px solid #555;
    border-top: 2px solid #fff;
  }

  .gray {
    border-bottom: 0;
    background: #bfc0bd;
  }

  .page .empty {
    border-bottom: 0;
    background: #fff;
  }

  .highlight {
    position: absolute;
    top: 115px;
    left: 63px;
    width: 1098px;
    height: 739px;
    border: 5px solid #ed1c24;
    border-radius: 3px;
    pointer-events: none;
  }

  .arrow {
    position: absolute;
    top: 142px;
    left: -279px;
    width: 316px;
    height: 160px;
  }

  /* status bar */
  .status {
    display: grid;
    grid-template-columns: 1fr auto 1fr;
    align-items: center;
    flex: none;
    height: 59px;
    border-top: 2px solid #c8cad0;
    background: #f0f0f0;
    color: #636363;
  }

  .status-left {
    display: flex;
    align-items: center;
    gap: 26px;
    padding-left: 43px;
  }

  .status-left span {
    margin-left: 30px;
  }

  .pager {
    display: flex;
    align-items: center;
    gap: 36px;
    margin-right: 34px;
  }

  .pager input {
    width: 216px;
    height: 37px;
    margin: 0 -12px;
    padding: 0;
    border: 2px solid #e6e6e6;
    background: #fff;
    color: #444;
    text-align: center;
  }

  .status-right {
    display: flex;
    align-items: center;
    justify-content: flex-end;
    padding-right: 42px;
  }

  .fits {
    display: flex;
    gap: 26px;
    padding: 0 17px 0 19px;
  }

  .views {
    display: flex;
    gap: 12px;
    padding: 0 6px 0 13px;
  }

  .views .view {
    width: 48px;
    height: 48px;
  }

  .percent {
    gap: 18px;
    margin: 0 32px;
  }

  .slider {
    width: 180px;
    height: 22px;
    margin: 0 22px;
    appearance: none;
    background: linear-gradient(to right, #636363 var(--fill), #c9cbd0 var(--fill)) center / 100% 6px no-repeat;
  }

  .slider::-webkit-slider-thumb {
    width: 20px;
    height: 22px;
    border: 2px solid #636363;
    border-radius: 11px;
    appearance: none;
    background: #fff;
  }

  .full {
    margin-left: 33px;
  }
</style>
